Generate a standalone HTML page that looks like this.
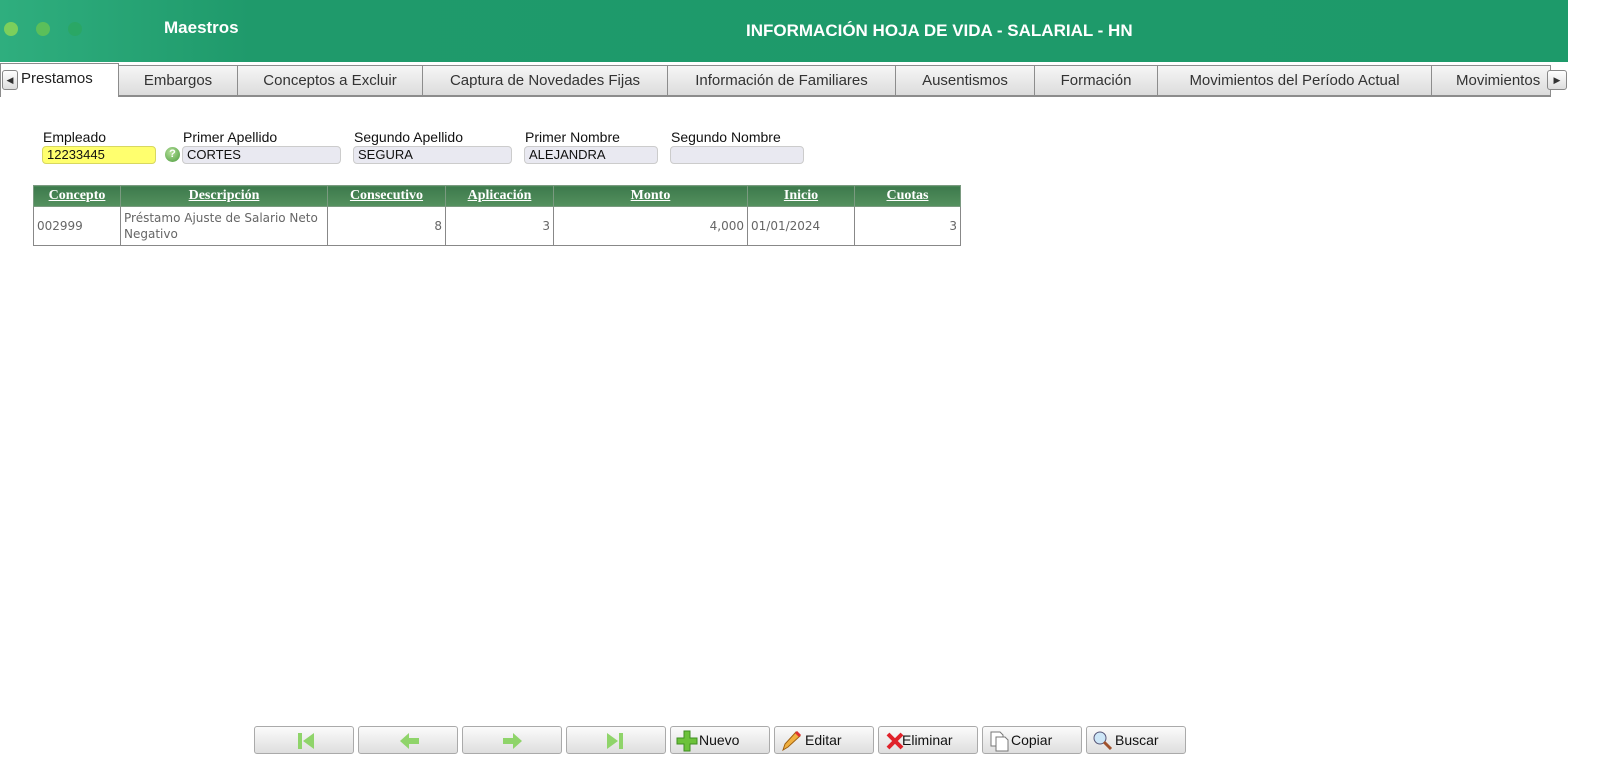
<!DOCTYPE html>
<html><head><meta charset="utf-8"><style>
*{box-sizing:border-box;margin:0;padding:0}
body{width:1606px;height:775px;background:#fff;font-family:"Liberation Sans",sans-serif;position:relative;overflow:hidden}
.hdr{position:absolute;left:0;top:0;width:1568px;height:62px;background:linear-gradient(90deg,#2fae7e 0px,#1f9a6b 250px,#1d9a6a 100%)}
.dot{position:absolute;top:22px;width:14px;height:14px;border-radius:50%}
.h1{position:absolute;left:164px;top:18px;color:#fff;font-weight:bold;font-size:17px}
.h2{position:absolute;left:746px;top:21px;color:#fff;font-weight:bold;font-size:17px}
.tabs{position:absolute;top:62px;left:0;width:1568px;height:35px}
.tab{position:absolute;top:3px;height:32px;background:linear-gradient(#f6f6f6,#dcdcdc);border:1px solid #8c8c8c;border-bottom:2px solid #8c8c8c;font-size:15px;color:#333;text-align:center;line-height:29px;white-space:nowrap;overflow:hidden}
.tab.act{background:#fff;border-bottom:none;top:1px;height:34px;text-align:left;padding-left:20px;color:#222}
.arr{position:absolute;width:16px;height:20px;border:1px solid #888;border-radius:3px;background:linear-gradient(#fff,#ddd);top:70px;font-size:9px;line-height:18px;text-align:center;color:#333}
.lbl{position:absolute;top:129px;font-size:14px;color:#111}
.inp{position:absolute;top:146px;height:18px;background:#e9e9f1;border:1px solid #ccc;border-radius:4px;font-size:13px;padding-left:4px;line-height:16px;color:#111}
table{position:absolute;left:33px;top:185px;border-collapse:collapse;font-size:12px;font-family:"DejaVu Sans",sans-serif}
th{background:linear-gradient(#3d7a4c,#55915f);color:#fff;font-family:"Liberation Serif",serif;font-weight:bold;text-decoration:underline;font-size:14px;height:21px;border:1px solid #7a9a80;padding:0}
td{border:1px solid #888;color:#666;height:39px;padding:0 3px;vertical-align:middle}
.r{text-align:right}
.btn{position:absolute;top:726px;width:100px;height:28px;border:1px solid #aaa;border-radius:3px;background:linear-gradient(#fbfbfb,#dedede);font-size:14px;color:#111;line-height:26px}
.btn span{position:absolute}
</style></head><body>
<div class="hdr">
<div class="dot" style="left:4px;background:#7ccf5c"></div>
<div class="dot" style="left:36px;background:#5bbf5a"></div>
<div class="dot" style="left:68px;background:#2aa765"></div>
<div class="h1">Maestros</div>
<div class="h2">INFORMACIÓN HOJA DE VIDA - SALARIAL - HN</div>
</div>
<div class="tabs">
<div class="tab act" style="left:0;width:119px">Prestamos</div>
<div class="tab" style="left:118px;width:120px">Embargos</div>
<div class="tab" style="left:237px;width:186px">Conceptos a Excluir</div>
<div class="tab" style="left:422px;width:246px">Captura de Novedades Fijas</div>
<div class="tab" style="left:667px;width:229px">Información de Familiares</div>
<div class="tab" style="left:895px;width:140px">Ausentismos</div>
<div class="tab" style="left:1034px;width:124px">Formación</div>
<div class="tab" style="left:1157px;width:275px">Movimientos del Período Actual</div>
<div class="tab" style="left:1431px;width:120px;text-align:left;padding-left:24px">Movimientos</div>
</div>
<div class="arr" style="left:2px">◀</div>
<div class="arr" style="left:1547px;width:20px">▶</div>

<div class="lbl" style="left:43px">Empleado</div>
<div class="inp" style="left:42px;width:114px;background:#ffff6e;border-color:#d8d860">12233445</div>
<div style="position:absolute;left:165px;top:147px;width:15px;height:15px;border-radius:50%;background:radial-gradient(circle at 40% 35%,#b5e09a,#4a9a3c);color:#fff;font-size:11px;font-weight:bold;text-align:center;line-height:15px">?</div>
<div class="lbl" style="left:183px">Primer Apellido</div>
<div class="inp" style="left:182px;width:159px">CORTES</div>
<div class="lbl" style="left:354px">Segundo Apellido</div>
<div class="inp" style="left:353px;width:159px">SEGURA</div>
<div class="lbl" style="left:525px">Primer Nombre</div>
<div class="inp" style="left:524px;width:134px">ALEJANDRA</div>
<div class="lbl" style="left:671px">Segundo Nombre</div>
<div class="inp" style="left:670px;width:134px"></div>

<table>
<tr><th style="width:87px">Concepto</th><th style="width:207px">Descripción</th><th style="width:118px">Consecutivo</th><th style="width:108px">Aplicación</th><th style="width:194px">Monto</th><th style="width:107px">Inicio</th><th style="width:106px">Cuotas</th></tr>
<tr><td>002999</td><td style="line-height:16px">Préstamo Ajuste de Salario Neto Negativo</td><td class="r">8</td><td class="r">3</td><td class="r">4,000</td><td>01/01/2024</td><td class="r">3</td></tr>
</table>

<div class="btn" style="left:254px"><svg style="position:absolute;left:41px;top:4px" width="20" height="20"><rect x="2" y="2" width="4" height="16" fill="#8fd46a"/><path d="M18 2v16L7 10z" fill="#8fd46a"/></svg></div>
<div class="btn" style="left:358px"><svg style="position:absolute;left:40px;top:4px" width="22" height="20"><path d="M1 10L10 2v5h10v6H10v5z" fill="#8fd46a"/></svg></div>
<div class="btn" style="left:462px"><svg style="position:absolute;left:38px;top:4px" width="22" height="20"><path d="M21 10L12 2v5H2v6h10v5z" fill="#8fd46a"/></svg></div>
<div class="btn" style="left:566px"><svg style="position:absolute;left:38px;top:4px" width="20" height="20"><rect x="14" y="2" width="4" height="16" fill="#8fd46a"/><path d="M2 2v16L13 10z" fill="#8fd46a"/></svg></div>
<div class="btn" style="left:670px"><svg style="position:absolute;left:5px;top:3px" width="22" height="22"><path d="M8 1h6v7h7v6h-7v7H8v-7H1V8h7z" fill="#6cc23a" stroke="#3f8f22"/></svg><span style="left:28px">Nuevo</span></div>
<div class="btn" style="left:774px"><svg style="position:absolute;left:5px;top:3px" width="22" height="22"><path d="M3 20l2-6L16 2l4 4L8 17z" fill="#f0b040" stroke="#a06010"/><path d="M16 2l4 4" stroke="#d33" stroke-width="3"/></svg><span style="left:30px">Editar</span></div>
<div class="btn" style="left:878px"><svg style="position:absolute;left:6px;top:4px" width="20" height="20"><path d="M3 3L17 17M17 3L3 17" stroke="#e0222a" stroke-width="4"/></svg><span style="left:23px">Eliminar</span></div>
<div class="btn" style="left:982px"><svg style="position:absolute;left:6px;top:3px" width="22" height="22"><path d="M2 2h9l3 3v11H2z" fill="#fff" stroke="#777"/><path d="M7 7h9l3 3v11H7z" fill="#fff" stroke="#777"/></svg><span style="left:28px">Copiar</span></div>
<div class="btn" style="left:1086px"><svg style="position:absolute;left:5px;top:3px" width="22" height="22"><circle cx="8" cy="8" r="6" fill="#cde6f7" stroke="#557"/><path d="M12 12l7 7" stroke="#a0522d" stroke-width="3"/></svg><span style="left:28px">Buscar</span></div>
</body></html>
